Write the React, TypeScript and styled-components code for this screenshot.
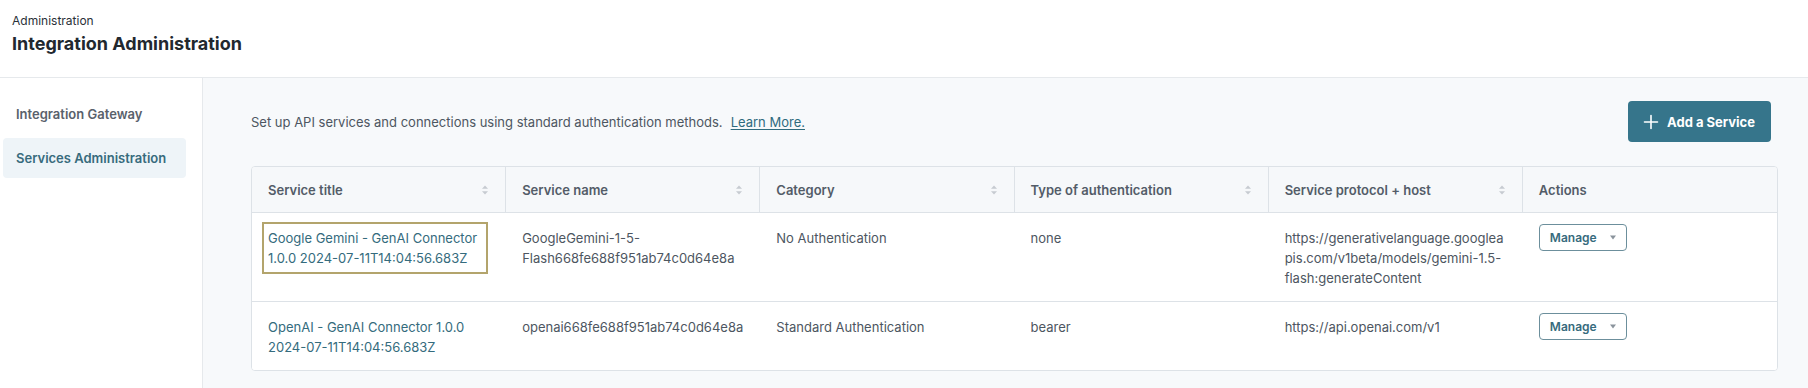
import React from "react";
import styled, { createGlobalStyle } from "styled-components";

const Global = createGlobalStyle`
  html, body { margin: 0; padding: 0; background: #ffffff; }
  body { font-family: Inter, "Noto Sans", Arial, sans-serif; color: #4a5360; -webkit-font-smoothing: antialiased; }
  * { box-sizing: border-box; }
`;

const Page = styled.div`
  width: 1808px;
  height: 388px;
  display: flex;
  flex-direction: column;
  overflow: hidden;
`;

const Header = styled.header`
  height: 78px;
  padding: 13px 12px 0;
  border-bottom: 1px solid #e6e9ec;
  background: #fff;
  display: flex;
  flex-direction: column;
`;

const Crumb = styled.div`
  font-size: 12px;
  line-height: 16px;
  color: #2a3038;
`;

const Title = styled.h1`
  margin: 3px 0 0;
  font-size: 18px;
  line-height: 24px;
  font-weight: 700;
  color: #22282f;
`;

const Body = styled.div`
  flex: 1;
  display: flex;
  min-height: 0;
`;

const Sidebar = styled.nav`
  width: 203px;
  flex: none;
  border-right: 1px solid #e6e9ec;
  background: #fff;
  padding: 16px 16px 0 3px;
  display: flex;
  flex-direction: column;
  gap: 4px;
`;

const NavItem = styled.div<{ $active?: boolean }>`
  height: 40px;
  display: flex;
  align-items: center;
  padding-left: 13px;
  border-radius: 4px;
  font-size: 13px;
  font-weight: 600;
  color: ${(p) => (p.$active ? "#376b7d" : "#59616b")};
  background: ${(p) => (p.$active ? "#eef4f8" : "transparent")};
`;

const Main = styled.main`
  flex: 1;
  background: #f7f9fb;
  padding: 23px 30px 0 48px;
  display: flex;
  flex-direction: column;
  gap: 24px;
`;

const TopRow = styled.div`
  display: flex;
  align-items: center;
  justify-content: space-between;
  padding-right: 7px;
`;

const Intro = styled.p`
  margin: 0;
  font-size: 13px;
  color: #4d5661;
`;

const LearnMore = styled.a`
  margin-left: 8px;
  color: #2f6b7e;
  text-decoration: underline;
  text-underline-offset: 2px;
`;

const PrimaryButton = styled.button`
  height: 41px;
  padding: 0 16px 0 15px;
  border: none;
  border-radius: 4px;
  background: #36758b;
  color: #fff;
  font-family: inherit;
  font-size: 13px;
  font-weight: 700;
  display: flex;
  align-items: center;
  gap: 8px;
`;

const Table = styled.div`
  border: 1px solid #dde2e7;
  border-radius: 4px;
  background: #fff;
  overflow: hidden;
`;

const Row = styled.div<{ $head?: boolean }>`
  display: grid;
  grid-template-columns: repeat(6, 1fr);
  background: ${(p) => (p.$head ? "#f6f8fa" : "#fff")};
  & + & { border-top: 1px solid #dde2e7; }
`;

const HeadCell = styled.div<{ $last?: boolean }>`
  height: 45px;
  padding: 0 16px;
  display: flex;
  align-items: center;
  justify-content: space-between;
  font-size: 13px;
  font-weight: 600;
  color: #535c68;
  border-right: ${(p) => (p.$last ? "none" : "1px solid #dde2e7")};
`;

const Cell = styled.div`
  padding: 15px 16px 13px;
  font-size: 13px;
  line-height: 20px;
  color: #4d5661;
  overflow-wrap: break-word;
  word-break: break-word;
  min-width: 0;
`;

const ActionCell = styled.div`
  padding: 11px 16px 12px;
`;

const TitleLink = styled.a<{ $focused?: boolean }>`
  color: #346b7d;
  text-decoration: none;
  display: inline-block;
  ${(p) =>
    p.$focused
      ? `outline: 2px solid #b3a46c; outline-offset: 4px; max-width: 214px;`
      : ""}
`;

const ManageButton = styled.button`
  height: 27px;
  width: 88px;
  padding: 0 0 0 10px;
  border: 1px solid #6c8f9c;
  border-radius: 4px;
  background: #fff;
  font-family: inherit;
  font-size: 12px;
  font-weight: 600;
  color: #376b7d;
  display: flex;
  align-items: center;
  gap: 12px;
`;

const SortIcon = () => (
  <svg width="8" height="12" viewBox="0 0 8 12" aria-hidden>
    <path d="M4 1.5 L7 4.8 H1 Z" fill="#c6cbd1" />
    <path d="M4 10.5 L7 7.2 H1 Z" fill="#c6cbd1" />
  </svg>
);

const Caret = () => (
  <svg width="8" height="5" viewBox="0 0 8 5" aria-hidden>
    <path d="M1 0.5 H7 L4 4.5 Z" fill="#8a939c" />
  </svg>
);

const Plus = () => (
  <svg width="16" height="16" viewBox="0 0 16 16" aria-hidden>
    <path d="M8 1.5 V14.5 M1.5 8 H14.5" stroke="#fff" strokeWidth="1.6" strokeLinecap="round" />
  </svg>
);

const columns = [
  "Service title",
  "Service name",
  "Category",
  "Type of authentication",
  "Service protocol + host",
  "Actions",
];

const rows = [
  {
    title: "Google Gemini - GenAI Connector 1.0.0 2024-07-11T14:04:56.683Z",
    name: "GoogleGemini-1-5-Flash668fe688f951ab74c0d64e8a",
    category: "No Authentication",
    auth: "none",
    host: "https://generativelanguage.googleapis.com/v1beta/models/gemini-1.5-flash:generateContent",
    focused: true,
  },
  {
    title: "OpenAI - GenAI Connector 1.0.0 2024-07-11T14:04:56.683Z",
    name: "openai668fe688f951ab74c0d64e8a",
    category: "Standard Authentication",
    auth: "bearer",
    host: "https://api.openai.com/v1",
    focused: false,
  },
];

export default function App() {
  return (
    <>
      <Global />
      <Page>
        <Header>
          <Crumb>Administration</Crumb>
          <Title>Integration Administration</Title>
        </Header>
        <Body>
          <Sidebar>
            <NavItem>Integration Gateway</NavItem>
            <NavItem $active>Services Administration</NavItem>
          </Sidebar>
          <Main>
            <TopRow>
              <Intro>
                Set up API services and connections using standard authentication methods.
                <LearnMore href="#">Learn More.</LearnMore>
              </Intro>
              <PrimaryButton>
                <Plus />
                Add a Service
              </PrimaryButton>
            </TopRow>
            <Table>
              <Row $head>
                {columns.map((c, i) => (
                  <HeadCell key={c} $last={i === columns.length - 1}>
                    <span>{c}</span>
                    {i < columns.length - 1 && <SortIcon />}
                  </HeadCell>
                ))}
              </Row>
              {rows.map((r) => (
                <Row key={r.name}>
                  <Cell>
                    <TitleLink href="#" $focused={r.focused}>
                      {r.title}
                    </TitleLink>
                  </Cell>
                  <Cell>{r.name}</Cell>
                  <Cell>{r.category}</Cell>
                  <Cell>{r.auth}</Cell>
                  <Cell>{r.host}</Cell>
                  <ActionCell>
                    <ManageButton>
                      Manage
                      <Caret />
                    </ManageButton>
                  </ActionCell>
                </Row>
              ))}
            </Table>
          </Main>
        </Body>
      </Page>
    </>
  );
}
